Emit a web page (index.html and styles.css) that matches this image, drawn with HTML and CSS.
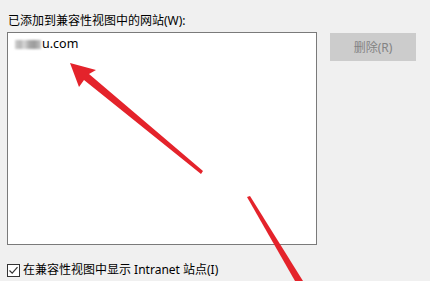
FILE: index.html
```html
<!DOCTYPE html>
<html lang="zh-CN">
<head>
    <meta charset="UTF-8">
    <link rel="stylesheet" href="styles.css">
    <title>兼容性视图设置</title>
</head>
<body>
    <div class="painel">
        <p class="rotulo">已添加到兼容性视图中的网站(W):</p>

        <div class="linha">
            <div class="lista">
                <div class="item"><span class="borrado"></span>u.com</div>
            </div>
            <button class="botao" disabled>删除(R)</button>
        </div>

        <label class="opcao">
            <span class="caixa">
                <svg width="13" height="13" viewBox="0 0 13 13">
                    <rect x="0.5" y="0.5" width="12" height="12" fill="#fff" stroke="#333"/>
                    <path d="M2.5 6.5 L5.2 9.2 L10.5 3.2" fill="none" stroke="#333" stroke-width="1.2"/>
                </svg>
            </span>
            在兼容性视图中显示 Intranet 站点(I)
        </label>
    </div>

    <!-- setas vermelhas por cima da captura -->
    <svg class="setas" width="430" height="281" viewBox="0 0 430 281">
        <polygon points="70,63 96,70 89,74 203,171 201,174 84,80 79,87" fill="#e4232b"/>
        <polygon points="247,197 250,196 303,281 295,281" fill="#e4232b"/>
    </svg>
</body>
</html>
```

FILE: styles.css
```css
body {
    margin: 0;
    width: 430px;
    height: 281px;
    overflow: hidden;
    background-color: #f0f0f0;
    font-family: "Noto Sans", "Noto Sans CJK SC", sans-serif;
    font-size: 12px;
    color: #000;
    position: relative;
}

.painel {
    padding: 12px 0 0 7px;
}

.rotulo {
    margin: 0 0 0 1px;
    line-height: 17px;
    height: 20px;
}

.linha {
    display: flex;
    align-items: flex-start;
}

.lista {
    width: 308px;
    height: 211px;
    background-color: #fff;
    border: 1px solid #7a7a7a;
}

.item {
    padding: 2px 0 0 7px;
    line-height: 18px;
    font-size: 12.5px;
    display: flex;
    align-items: center;
}

.borrado {
    display: inline-block;
    width: 26px;
    height: 9px;
    margin-right: 1px;
    background: linear-gradient(to right, #cfcfcf 0, #b5b5b5 20%, #d8d8d8 35%, #a9a9a9 55%, #9c9c9c 75%, #c4c4c4 100%);
    filter: blur(0.8px);
}

.botao {
    margin: 1px 0 0 13px;
    width: 86px;
    height: 28px;
    background-color: #cccccc;
    border: 1px solid #cccccc;
    color: #838383;
    font-family: inherit;
    font-size: 12px;
    padding: 0;
}

.opcao {
    display: flex;
    align-items: center;
    gap: 3px;
    margin-top: 17px;
    line-height: 16px;
}

.caixa {
    display: flex;
    width: 13px;
    height: 13px;
}

.setas {
    position: absolute;
    left: 0;
    top: 0;
    pointer-events: none;
}
```
